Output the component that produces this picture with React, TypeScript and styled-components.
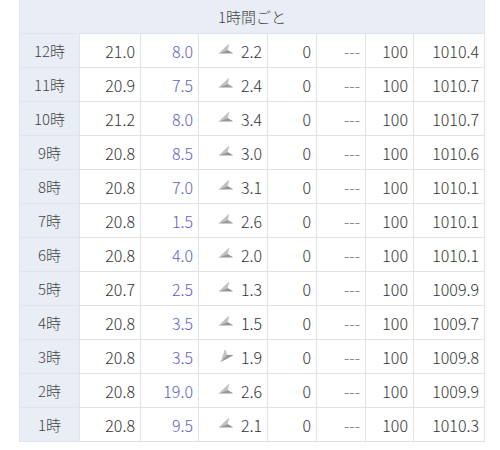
import styled, { createGlobalStyle } from "styled-components";

const GlobalStyle = createGlobalStyle`
  body {
    margin: 0;
    background: #fff;
    font-family: "Noto Sans CJK JP", "Noto Sans", sans-serif;
    font-weight: 300;
    color: #333;
  }
`;

type Row = [string, string, string, number, string, string, string, string, string];

const rows: Row[] = [
  ["12時", "21.0", "8.0", 22, "2.2", "0", "---", "100", "1010.4"],
  ["11時", "20.9", "7.5", 22, "2.4", "0", "---", "100", "1010.7"],
  ["10時", "21.2", "8.0", 22, "3.4", "0", "---", "100", "1010.7"],
  ["9時", "20.8", "8.5", 22, "3.0", "0", "---", "100", "1010.6"],
  ["8時", "20.8", "7.0", 22, "3.1", "0", "---", "100", "1010.1"],
  ["7時", "20.8", "1.5", 22, "2.6", "0", "---", "100", "1010.1"],
  ["6時", "20.8", "4.0", 22, "2.0", "0", "---", "100", "1010.1"],
  ["5時", "20.7", "2.5", 22, "1.3", "0", "---", "100", "1009.9"],
  ["4時", "20.8", "3.5", 22, "1.5", "0", "---", "100", "1009.7"],
  ["3時", "20.8", "3.5", 50, "1.9", "0", "---", "100", "1009.8"],
  ["2時", "20.8", "19.0", 22, "2.6", "0", "---", "100", "1009.9"],
  ["1時", "20.8", "9.5", 22, "2.1", "0", "---", "100", "1010.3"],
];

const widths = [60, 61, 58, 69, 49, 49, 48, 71];

const WindArrow: React.FC<{ tilt: number }> = ({ tilt }) => (
  <ArrowSvg width="16" height="14" viewBox="0 0 16 14">
    <g transform={`rotate(${-tilt} 8 7)`}>
      <polygon points="1,7 15,1.5 11,7" fill="#c2c2c2" />
      <polygon points="1,7 15,12.5 11,7" fill="#979797" />
    </g>
  </ArrowSvg>
);

export default function App() {
  return (
    <>
      <GlobalStyle />
      <Page>
        <Table>
          <colgroup>
            {widths.map((w, i) => (
              <col key={i} style={{ width: w }} />
            ))}
          </colgroup>
          <thead>
            <tr>
              <HeadCell colSpan={8}>1時間ごと</HeadCell>
            </tr>
          </thead>
          <tbody>
            {rows.map((r) => (
              <tr key={r[0]}>
                <HourCell scope="row">{r[0]}</HourCell>
                <Cell>{r[1]}</Cell>
                <Cell $blue>{r[2]}</Cell>
                <Cell>
                  <Wind>
                    <WindArrow tilt={r[3]} />
                    <span>{r[4]}</span>
                  </Wind>
                </Cell>
                <Cell>{r[5]}</Cell>
                <Cell $muted>{r[6]}</Cell>
                <Cell>{r[7]}</Cell>
                <Cell>{r[8]}</Cell>
              </tr>
            ))}
          </tbody>
        </Table>
      </Page>
    </>
  );
}

const Page = styled.div`
  padding-left: 19px;
  margin-top: -1px;
`;

const Table = styled.table`
  width: 465px;
  border-collapse: collapse;
  table-layout: fixed;
  font-size: 16px;
`;

const HeadCell = styled.th`
  height: 33px;
  padding: 0;
  background: #e9eef6;
  border: 1px solid #dfe3ea;
  font-weight: 300;
  font-size: 15px;
  color: #444;
  text-align: center;
`;

const HourCell = styled.th`
  height: 33px;
  padding: 0;
  background: #e9eef6;
  border: 1px solid #dfe3ea;
  font-weight: 300;
  font-size: 15px;
  text-align: center;
  color: #444;
`;

const Cell = styled.td<{ $blue?: boolean; $muted?: boolean }>`
  height: 33px;
  padding: 0 5px 0 0;
  border: 1px solid #e2e2e2;
  text-align: right;
  color: ${(p) => (p.$blue ? "#5e5ec8" : p.$muted ? "#777" : "#333")};
  white-space: nowrap;
`;

const Wind = styled.span`
  display: inline-flex;
  align-items: center;
  gap: 8px;
`;

const ArrowSvg = styled.svg`
  display: block;
`;
